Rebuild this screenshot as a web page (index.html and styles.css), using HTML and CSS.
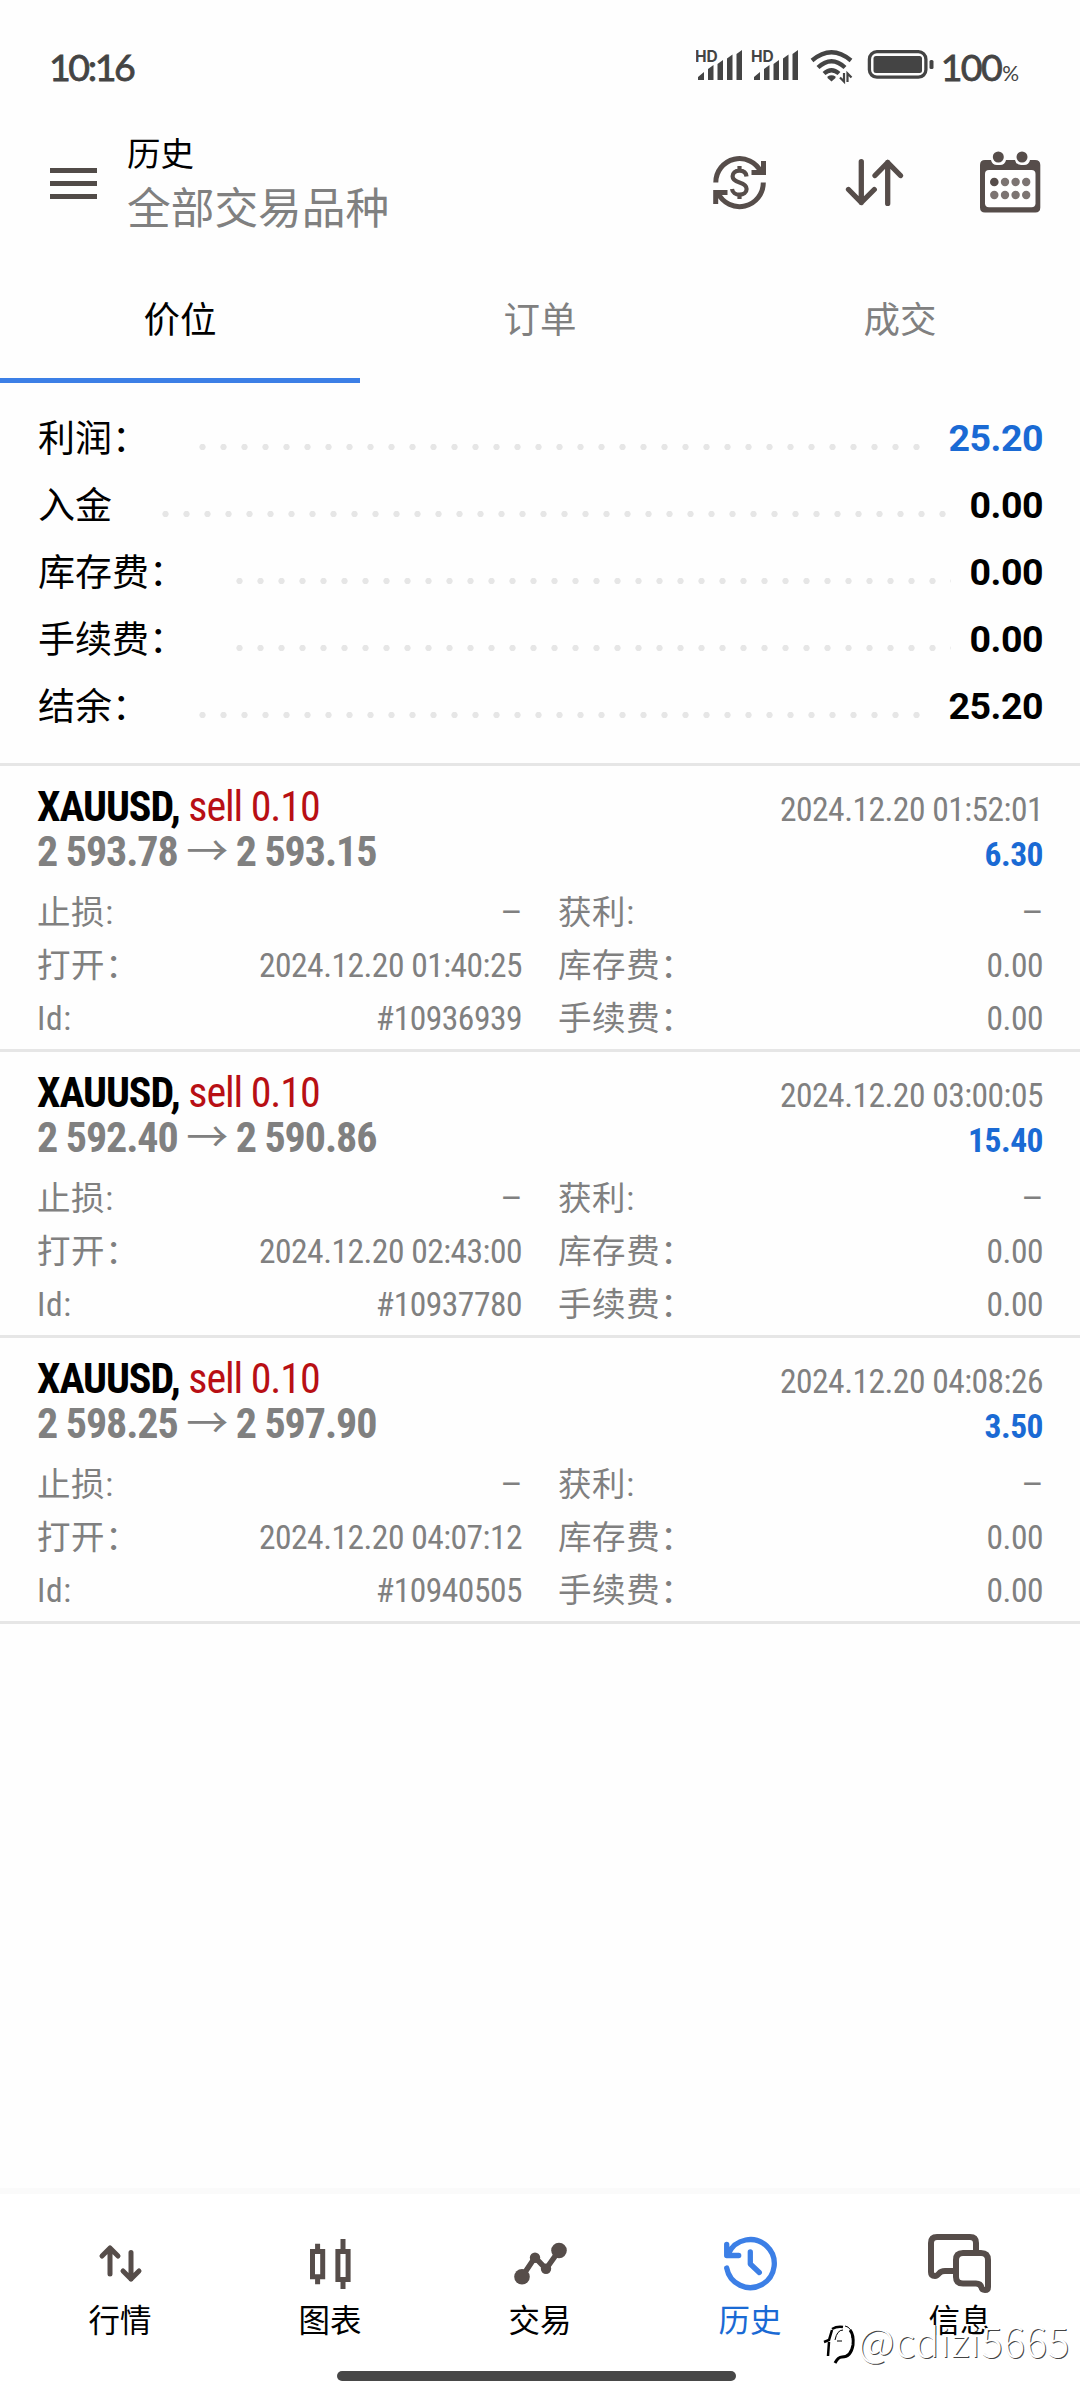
FILE: index.html
```html
<!DOCTYPE html>
<html lang="zh-CN">
<head>
<meta charset="utf-8">
<title>历史</title>
<link rel="stylesheet" href="styles.css">
</head>
<body>
<div class="status">
  <span class="clock">10:16</span>
  <div class="status-right">
    <svg class="signals" width="238" height="36" viewBox="0 0 238 36" fill="#444">
      <defs>
        <g id="sig">
          <text x="-1" y="13" font-size="15.5" font-weight="700">HD</text>
          <path d="M2 31v-3l6-5v8zM12 31V20l5.500-4v15zM21.500 31V15l5.500-4v20zM31 31V9.500l5.500-4V31zM40.500 31V5l5.500-4v30z"/>
        </g>
      </defs>
      <use href="#sig"/>
      <use href="#sig" x="56"/>
      <g fill="none" stroke="#444" stroke-width="4.300">
        <path d="M116 11.500Q135.500-5 155 11.500M122 18.500Q135.500 6 149 18.500M128 24.500Q135.500 18 143 24.500"/>
      </g>
      <path d="M131.500 27.500q4-2.500 8 0v1.500l-4 3.500-4-3.500z"/>
      <path d="M148 24v8.500l-4-4M151.500 33v-8.500l4 4" fill="none" stroke="#444" stroke-width="2.200"/>
      <rect x="173.400" y="2.700" width="56.500" height="25.500" rx="7.500" fill="none" stroke="#444" stroke-width="3.300"/>
      <rect x="177.500" y="7" width="48.500" height="17" rx="2.500"/>
      <rect x="233.500" y="11" width="4" height="9" rx="1.500"/>
    </svg>
    <span class="battery">100</span><span class="percent">%</span>
  </div>
</div>

<header class="header">
  <div class="menu"><i></i><i></i><i></i></div>
  <div class="titles">
    <h1>历史</h1>
    <p>全部交易品种</p>
  </div>
  <div class="actions">
    <svg width="64" height="64" viewBox="0 0 64 64" fill="none" stroke="#564d4a" stroke-width="5">
      <path d="M7.800 31.500A23.800 23.800 0 0 1 53 21M55.300 31.500A23.800 23.800 0 0 1 10 42M55.500 10v11.600H43.500M7.700 53V41.500H19.500"/>
      <path stroke-width="4.200" d="M38.500 25.500C38 21 35 19.700 31.500 19.700C27 19.700 24.600 22 24.600 25.300C24.600 29 28 30.500 31.500 31.500C35.500 32.700 38.600 34 38.600 38C38.600 41.500 35.500 43.700 31.500 43.700C27.500 43.700 24.500 41.500 24 38M31.500 15v5M31.500 43v5"/>
    </svg>
    <svg width="64" height="64" viewBox="0 0 64 64" fill="none" stroke="#564d4a" stroke-width="5.300" stroke-linecap="round" stroke-linejoin="round">
      <path d="M18.300 10.600V51.500M5.500 38.500L18.300 51.500L31.300 38.500M44.700 52.400V11.500M32 24.500L44.700 11.500L57.500 24.500"/>
    </svg>
    <svg width="64" height="64" viewBox="0 1 64 64">
      <path fill="#564d4a" d="M7 10h6q1 5 6 5h3q5 0 6-5h9q1 5 6 5h3q5 0 6-5h5q5.300 0 5.300 5v42.500q0 5-5 5H7q-5 0-5-5V15q0-5 5-5z"/>
      <rect x="7" y="20" width="50.500" height="37.300" rx="4" fill="#fff"/>
      <g fill="#564d4a"><circle cx="20.300" cy="7" r="5.500"/><circle cx="44" cy="7" r="5.500"/><circle cx="16.300" cy="32" r="4.300"/></g>
      <g fill="#7c7472"><circle cx="27" cy="32" r="4.200"/><circle cx="37.600" cy="32" r="4.200"/><circle cx="48.200" cy="32" r="4.200"/><circle cx="16.300" cy="45" r="4.200"/><circle cx="27" cy="45" r="4.200"/><circle cx="37.600" cy="45" r="4.200"/><circle cx="48.200" cy="45" r="4.200"/></g>
    </svg>
  </div>
</header>

<nav class="tabs">
  <a class="tab active">价位</a>
  <a class="tab">订单</a>
  <a class="tab">成交</a>
</nav>

<section class="summary">
  <div class="sum-row"><span>利润：</span><i class="dots"></i><b class="blue">25.20</b></div>
  <div class="sum-row"><span>入金</span><i class="dots"></i><b>0.00</b></div>
  <div class="sum-row"><span>库存费：</span><i class="dots"></i><b>0.00</b></div>
  <div class="sum-row"><span>手续费：</span><i class="dots"></i><b>0.00</b></div>
  <div class="sum-row"><span>结余：</span><i class="dots"></i><b>25.20</b></div>
</section>

<main class="deals">
  <article class="deal">
    <div class="line"><span class="symbol"><b>XAUUSD,</b> <em>sell 0.10</em></span><span class="date">2024.12.20 01:52:01</span></div>
    <div class="line"><span class="price">2 593.78 <i class="arrow">→</i> 2 593.15</span><b class="profit">6.30</b></div>
    <div class="details">
      <div><label>止损:</label><span class="dash">–</span></div><div><label>获利:</label><span class="dash">–</span></div>
      <div><label>打开：</label><span>2024.12.20 01:40:25</span></div><div><label>库存费：</label><span>0.00</span></div>
      <div><label>Id:</label><span>#10936939</span></div><div><label>手续费：</label><span>0.00</span></div>
    </div>
  </article>
  <article class="deal">
    <div class="line"><span class="symbol"><b>XAUUSD,</b> <em>sell 0.10</em></span><span class="date">2024.12.20 03:00:05</span></div>
    <div class="line"><span class="price">2 592.40 <i class="arrow">→</i> 2 590.86</span><b class="profit">15.40</b></div>
    <div class="details">
      <div><label>止损:</label><span class="dash">–</span></div><div><label>获利:</label><span class="dash">–</span></div>
      <div><label>打开：</label><span>2024.12.20 02:43:00</span></div><div><label>库存费：</label><span>0.00</span></div>
      <div><label>Id:</label><span>#10937780</span></div><div><label>手续费：</label><span>0.00</span></div>
    </div>
  </article>
  <article class="deal">
    <div class="line"><span class="symbol"><b>XAUUSD,</b> <em>sell 0.10</em></span><span class="date">2024.12.20 04:08:26</span></div>
    <div class="line"><span class="price">2 598.25 <i class="arrow">→</i> 2 597.90</span><b class="profit">3.50</b></div>
    <div class="details">
      <div><label>止损:</label><span class="dash">–</span></div><div><label>获利:</label><span class="dash">–</span></div>
      <div><label>打开：</label><span>2024.12.20 04:07:12</span></div><div><label>库存费：</label><span>0.00</span></div>
      <div><label>Id:</label><span>#10940505</span></div><div><label>手续费：</label><span>0.00</span></div>
    </div>
  </article>
</main>

<footer class="bottom">
  <nav class="bottom-nav">
    <a class="item">
      <svg width="64" height="64" viewBox="0 0 64 64" fill="none" stroke="#564d4a" stroke-width="5" stroke-linecap="round" stroke-linejoin="round"><path d="M22 44V18M14 26l8-8 8 8M43 22.500V49M35 41l8 8 8-8"/></svg>
      <span>行情</span>
    </a>
    <a class="item">
      <svg width="64" height="64" viewBox="0 0 64 64" fill="none" stroke="#564d4a" stroke-width="5"><path d="M14.500 21.500h10.200v25.300H14.500zM39.900 21.500h10.200v28H39.900zM19.600 13.700V21M19.600 47v7.300M45 9v12M45 50v9"/></svg>
      <span>图表</span>
    </a>
    <a class="item">
      <svg width="64" height="64" viewBox="0 0 64 64" fill="#564d4a"><path d="M14 46.700L27 27.300L38 39L51 20.700" fill="none" stroke="#564d4a" stroke-width="5.500"/><circle cx="14" cy="46.700" r="7.800"/><circle cx="27" cy="27.800" r="5.200"/><circle cx="38" cy="38.800" r="5.200"/><circle cx="51" cy="20.500" r="7.800"/></svg>
      <span>交易</span>
    </a>
    <a class="item current">
      <svg width="64" height="64" viewBox="0 0 64 64" fill="none" stroke="#3c7fe6" stroke-width="5.300" stroke-linecap="round" stroke-linejoin="round"><path d="M8.700 38A24 24 0 1 0 10.500 23.500M8.700 14.500v11h12M32.300 22v12l9 8.500"/></svg>
      <span>历史</span>
    </a>
    <a class="item">
      <svg width="64" height="64" viewBox="0 0 64 64" fill="none" stroke="#564d4a" stroke-width="6"><path d="M48 22V13Q48 7 42 7H9Q3 7 3 13V42Q3 46 7 46Q9 46 11 43.500Q13 41 17 41H28M28 30Q28 23 35 23H53Q60 23 60 30V57Q60 60 57 60Q54 60 53.500 57.500Q52.500 53.500 48 53.500H35Q28 53.500 28 47Z"/></svg>
      <span>信息</span>
    </a>
  </nav>
  <div class="home-bar"></div>
</footer>

<div class="watermark">
  <svg width="34" height="42" viewBox="0 0 34 42" fill="none" stroke="#000">
    <path stroke-width="2.500" d="M9 4Q14 1 20 2M9 5L6 15L1 17M6 17L5 31"/>
    <path stroke-width="1" d="M20 5Q14 5 12 15M14 16h5M22 1Q29 2 29 13"/>
    <path stroke-width="3" d="M27 5Q31 10 30 20Q28 32 19 32Q15 32 12 38"/>
  </svg>
  <span>@cdizi5665</span>
</div>
</body>
</html>
```
FILE: styles.css
```css
* { box-sizing: border-box; }

body {
  margin: 0;
  width: 1080px;
  height: 2400px;
  position: relative;
  display: flex;
  flex-direction: column;
  background: #fefefe;
  color: #000;
  font-family: Roboto, "Noto Sans CJK SC", sans-serif;
  overflow: hidden;
}

h1, p { margin: 0; font-weight: 400; }
i, em { font-style: normal; }

/* status bar */
.status {
  height: 128px;
  padding: 4px 61px 0 49px;
  display: flex;
  align-items: center;
  justify-content: space-between;
  color: #444;
  font-family: Lato, sans-serif;
}
.clock { font-size: 37.5px; letter-spacing: -2.4px; -webkit-text-stroke: .8px #444; }
.status-right { display: flex; align-items: baseline; }
.signals { align-self: center; margin: 2px 7px 0 0; font-family: Inter, sans-serif; }
.battery { font-size: 37.5px; letter-spacing: -1.6px; -webkit-text-stroke: .8px #444; }
.percent { font-size: 21px; padding-left: 1px; }

/* header */
.header {
  height: 110px;
  padding: 0 38px 0 50px;
  display: flex;
  align-items: center;
}
.menu { display: flex; flex-direction: column; gap: 8px; width: 47px; }
.menu i { height: 5px; background: #514b48; }
.titles { flex: 1; padding: 3px 0 0 30px; }
.titles h1 { font-size: 33.5px; line-height: 48px; }
.titles p { font-size: 43.7px; line-height: 60px; color: #808080; }
.actions { display: flex; gap: 71px; }

/* tabs */
.tabs { display: flex; height: 145px; }
.tab {
  flex: 1;
  padding-top: 19px;
  display: flex;
  align-items: center;
  justify-content: center;
  border-bottom: 5px solid transparent;
  font-size: 36.5px;
  color: #808080;
}
.tab.active { color: #000; border-color: #3c7fe6; }

/* summary */
.summary { padding: 21px 37px 24px 38px; border-bottom: 3px solid #e6e6e6; }
.sum-row { display: flex; align-items: center; height: 67px; font-size: 37px; }
.sum-row span { padding-bottom: 3px; }
.sum-row b { font-size: 37.5px; letter-spacing: -.5px; padding-top: 1px; }
.blue { color: #1a6ad4; }
.dots {
  flex: 1;
  height: 8px;
  margin: 18px 19px 0 43px;
  background: radial-gradient(circle, #e6e6e6 2.8px, transparent 3.500px) left center / 21px 8px repeat-x;
}

/* deals */
.deals { flex: 1; }
.deal {
  height: 286px;
  padding: 18px 37px 0;
  border-bottom: 3px solid #e6e6e6;
  font-family: "Roboto Condensed", "Noto Sans CJK SC", sans-serif;
}
.line {
  display: flex;
  justify-content: space-between;
  align-items: baseline;
  height: 45px;
  line-height: 45px;
  font-size: 42px;
}
.symbol, .price { letter-spacing: -1.08px; }
.symbol em { color: #b80f14; }
.price { color: #808080; font-weight: 700; }
.arrow { font-weight: 400; }
.date, .profit { font-size: 33.500px; letter-spacing: -.5px; }
.date { color: #808080; }
.profit { color: #1a6ad4; }
.details {
  margin-top: 12px;
  display: grid;
  grid-template-columns: 1fr 1fr;
  column-gap: 36px;
  font-size: 33.500px;
  line-height: 53px;
  letter-spacing: -.5px;
  color: #808080;
}
.details div { display: flex; justify-content: space-between; height: 53px; }
.details label { letter-spacing: .6px; }
.dash { font-family: Roboto, sans-serif; }

/* bottom navigation */
.bottom { height: 212px; border-top: 6px solid #fafafa; background: #fff; }
.bottom-nav { display: flex; padding: 36px 15px 0; }
.item { flex: 1; display: flex; flex-direction: column; align-items: center; }
.item span { font-size: 31.5px; line-height: 48px; padding-top: 4px; }
.current span { color: #1a6ad4; }
.home-bar { width: 399px; height: 10px; margin: 25px 0 0 337px; border-radius: 5px; background: #474747; }

.watermark {
  position: absolute;
  left: 823px;
  top: 2325px;
  display: flex;
  gap: 1px;
  color: #fff;
  font: 300 40px/30px "Noto Sans CJK SC", sans-serif;
  letter-spacing: .8px;
  text-shadow: 1px 1px 0 #444;
}
```
